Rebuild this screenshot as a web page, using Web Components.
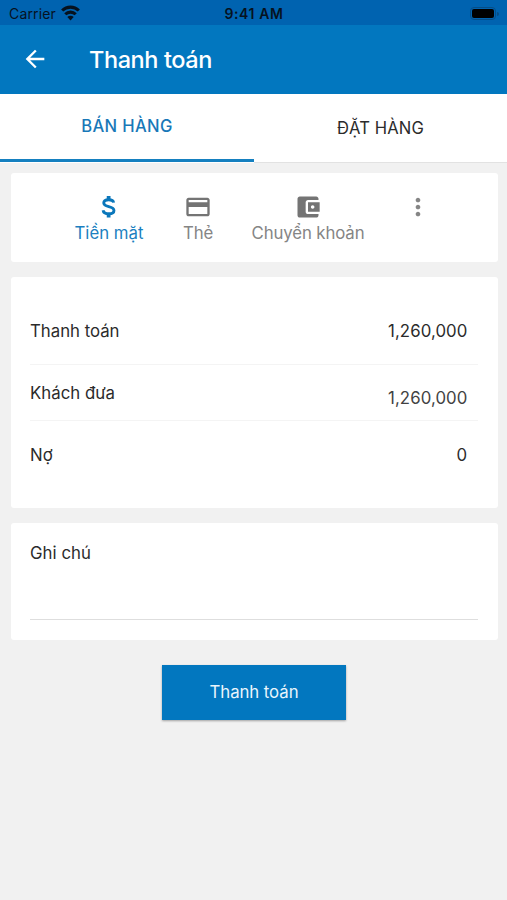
<!DOCTYPE html>
<html lang="vi">
<head>
<meta charset="utf-8">
<title>Thanh toán</title>
<style>
html,body{margin:0;height:100%}
body{background:#f1f1f1;font-family:Inter,"Liberation Sans",sans-serif;font-size:16.8px;line-height:20px;color:#2b2b2b;overflow:hidden}
</style>
</head>
<body>
<pay-screen></pay-screen>
<script>
const define = (name, html, setup) => customElements.define(name, class extends HTMLElement {
  constructor() {
    super();
    this.attachShadow({ mode: "open" }).innerHTML = html;
  }
  connectedCallback() { if (setup) setup(this, this.shadowRoot); }
});

// Single-line label; letter-spacing is tuned so the text takes the given width.
define("fit-text", `<style>
:host{display:inline-block;white-space:nowrap;flex:none}
span{display:inline-block}
</style><span></span>`, (el, root) => {
  const span = root.querySelector("span");
  span.textContent = el.getAttribute("text");
  const w = +el.getAttribute("w");
  if (!w) return;
  const gap = (w - span.getBoundingClientRect().width) / span.textContent.length;
  span.style.letterSpacing = gap.toFixed(3) + "px";
  el.style.width = w + "px";
});

const icons = {
  back: `<path fill="currentColor" d="M20 11H7.83l5.59-5.59L12 4l-8 8 8 8 1.41-1.41L7.83 13H20v-2z"/>`,
  dollar: `<g transform="translate(.6 .7) scale(.92)"><path fill="none" stroke="currentColor" stroke-width="2.7" d="M16.7 8.2C16.4 6.3 14.6 5.5 12.1 5.5 9.4 5.5 7.5 6.6 7.5 8.6 7.5 13 17 10.8 17 15.5 17 17.5 14.8 18.6 12.2 18.6 9.2 18.6 7.2 17.7 6.9 15.3"/><path fill="currentColor" d="M10.3 2h3.5v4h-3.5zM10.3 18.5h3.5v3.5h-3.5z"/></g>`,
  card: `<path fill="currentColor" d="M20 4H4c-1.11 0-1.99.89-1.99 2L2 18c0 1.11.89 2 2 2h16c1.11 0 2-.89 2-2V6c0-1.11-.89-2-2-2zm0 14H4v-6h16v6zm0-10H4V6h16v2z"/>`,
  wallet: `<path fill="currentColor" d="M21 18v1c0 1.1-.9 2-2 2H5c-1.11 0-2-.9-2-2V5c0-1.1.89-2 2-2h14c1.1 0 2 .9 2 2v1h-9c-1.11 0-2 .9-2 2v8c0 1.1.89 2 2 2h9zm-9-2h10V8H12v8zm4-2.5c-.83 0-1.5-.67-1.5-1.5s.67-1.5 1.5-1.5 1.5.67 1.5 1.5-.67 1.5-1.5 1.5z"/>`,
  more: `<path fill="currentColor" d="M12 8c1.1 0 2-.9 2-2s-.9-2-2-2-2 .9-2 2 .9 2 2 2zm0 2c-1.1 0-2 .9-2 2s.9 2 2 2 2-.9 2-2-.9-2-2-2zm0 6c-1.1 0-2 .9-2 2s.9 2 2 2 2-.9 2-2-.9-2-2-2z"/>`,
  wifi: `<g fill="none" stroke="currentColor" stroke-width="3.9"><path d="M1.5 9.5a15 15 0 0 1 21 0"/><path d="M5.4 14.2a9.4 9.4 0 0 1 13.2 0"/></g><path fill="currentColor" d="M12 22l-4-4.2a5.6 5.6 0 0 1 8 0z"/>`
};
define("ui-icon", `<style>:host{display:block;flex:none}svg{display:block;width:100%;height:100%}</style><svg viewBox="0 0 24 24"></svg>`,
  (el, root) => { root.querySelector("svg").innerHTML = icons[el.getAttribute("name")]; });

define("status-bar", `<style>
:host{display:grid;grid-template-columns:1fr auto 1fr;align-items:center;height:25px;box-sizing:border-box;padding:2px 8px 0 9px;background:#0063b0;color:#06121f;font-size:14px}
.l{display:flex;align-items:center;gap:5px}
ui-icon{width:19px;height:19px;margin-top:-3px}
.t{font-weight:600;font-size:14px}
.b{justify-self:end;display:flex;align-items:center;gap:1px}
.body{width:22px;height:9px;border:1px solid #064d86;border-radius:4px;padding:1px;margin-top:-1px}
.fill{height:100%;background:#000;border-radius:2px}
.nub{width:2px;height:4px;border-radius:0 2px 2px 0;background:#064d86}
</style>
<div class="l"><fit-text text="Carrier" w="47"></fit-text><ui-icon name="wifi"></ui-icon></div>
<fit-text class="t" text="9:41 AM" w="59"></fit-text>
<div class="b"><div class="body"><div class="fill"></div></div><div class="nub"></div></div>`);

define("app-bar", `<style>
:host{display:flex;align-items:center;box-sizing:border-box;height:69px;background:#0277bf;color:#fff;padding:0 0 1px 20.5px;gap:40.5px}
ui-icon{width:28px;height:28px}
fit-text{font-size:23.5px;font-weight:550;line-height:28px;margin-top:1px}
</style><ui-icon name="back"></ui-icon><fit-text text="Thanh toán" w="123"></fit-text>`);

define("tab-bar", `<style>
:host{display:grid;grid-template-columns:254px 1fr;height:69px;background:#fff;font-size:16.6px}
div{display:flex;justify-content:center;box-sizing:border-box;padding-top:24px;border-bottom:1px solid #e2e2e2}
.on{color:#1878b8;font-weight:550;padding-top:22px;border-bottom:3px solid #1580c0;height:68px}
</style><div class="on"><fit-text text="BÁN HÀNG" w="91.5"></fit-text></div><div><fit-text text="ĐẶT HÀNG" w="87"></fit-text></div>`);

define("ui-card", `<style>:host{display:block;background:#fff;border-radius:3px;box-sizing:border-box}</style><slot></slot>`);

define("pay-method", `<style>
:host{display:flex;flex-direction:column;align-items:center;color:#858585}
:host([active]){color:#1b7fc0}
ui-icon{width:28px;height:28px;color:#747474;margin-right:1px}
:host([active]) ui-icon{color:#0b77bb}
:host([icon=more]) ui-icon{color:#858585}
fit-text{margin-top:2px}
</style><ui-icon></ui-icon>`, (el, root) => {
  const icon = document.createElement("ui-icon");
  icon.setAttribute("name", el.getAttribute("icon"));
  root.querySelector("ui-icon").replaceWith(icon);
  if (el.hasAttribute("text")) {
    const t = document.createElement("fit-text");
    t.setAttribute("text", el.getAttribute("text"));
    t.setAttribute("w", el.getAttribute("w"));
    root.append(t);
  }
});

define("amount-row", `<style>
:host{display:flex;justify-content:space-between;align-items:flex-start;box-sizing:border-box;padding-right:10px;border-bottom:1px solid #f4f4f4}
:host(:last-child){border:0}
</style><slot></slot>`);

define("pay-button", `<style>
:host{display:flex;align-items:center;justify-content:center;box-sizing:border-box;padding-bottom:1px;width:184px;height:55px;background:#0277bf;color:#e9f5fc;box-shadow:0 1px 2px #0005}
</style><slot></slot>`);

define("pay-screen", `<style>
:host{display:flex;flex-direction:column;width:507px;height:900px;background:#f1f1f1}
main{display:flex;flex-direction:column;gap:15px;padding:10px 9.5px 0 10.5px}
.methods{display:flex;height:89px;padding:20px 0 0 64px;align-items:flex-start}
.methods pay-method:nth-child(2){margin-left:39.5px}
.methods pay-method:nth-child(3){margin-left:38.5px}
.methods pay-method:nth-child(4){margin-left:39.5px}
.amounts{height:231px;padding:0 20px 0 19.5px}
.r1{height:88px;padding-top:44px}
.r2{height:56px;padding-top:18px}
.r2 .n{margin-top:5px;color:#424242}
.r3{height:80px;padding-top:24px}
.note{height:117px;padding:20px 20px 0 19.5px}
.line{margin-top:56px;height:1px;background:#dedede}
.action{display:flex;justify-content:center;margin-top:10px}
.note fit-text{display:block}
</style>
<status-bar></status-bar>
<app-bar></app-bar>
<tab-bar></tab-bar>
<main>
<ui-card class="methods">
<pay-method icon="dollar" text="Tiền mặt" w="69" active></pay-method>
<pay-method icon="card" text="Thẻ" w="30"></pay-method>
<pay-method icon="wallet" text="Chuyển khoản" w="113"></pay-method>
<pay-method icon="more"></pay-method>
</ui-card>
<ui-card class="amounts">
<amount-row class="r1"><fit-text text="Thanh toán" w="89.5"></fit-text><fit-text class="n" text="1,260,000" w="79.5"></fit-text></amount-row>
<amount-row class="r2"><fit-text text="Khách đưa" w="85"></fit-text><fit-text class="n" text="1,260,000" w="79.5"></fit-text></amount-row>
<amount-row class="r3"><fit-text text="Nợ" w="23"></fit-text><fit-text text="0" w="11"></fit-text></amount-row>
</ui-card>
<ui-card class="note"><fit-text text="Ghi chú" w="61"></fit-text><div class="line"></div></ui-card>
<div class="action"><pay-button><fit-text text="Thanh toán" w="89"></fit-text></pay-button></div>
</main>`);
</script>
</body>
</html>
